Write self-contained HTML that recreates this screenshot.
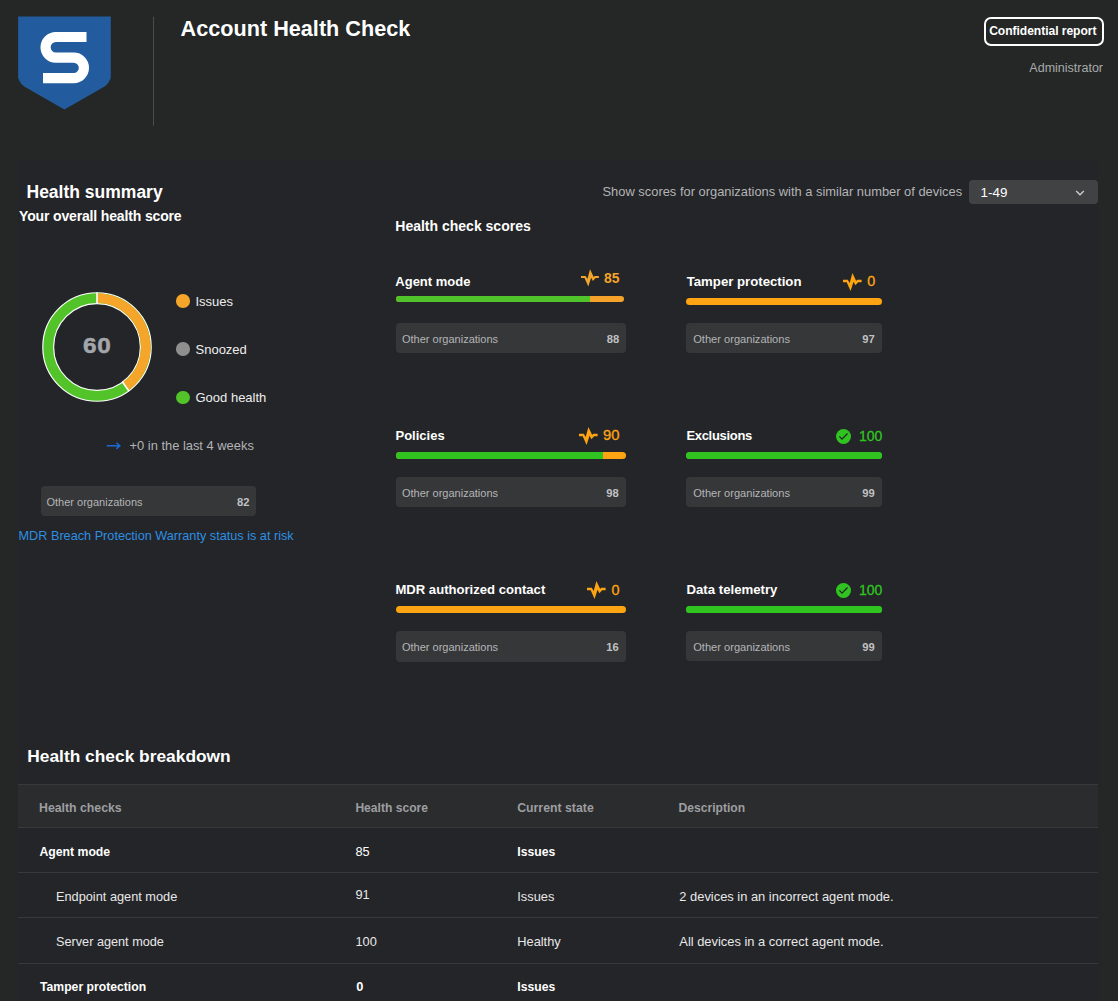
<!DOCTYPE html>
<html><head><meta charset="utf-8">
<style>
html,body{margin:0;padding:0;}
body{width:1118px;height:1001px;overflow:hidden;background:#242726;position:relative;font-family:"Liberation Sans",sans-serif;color:#fff;}
.t{position:absolute;line-height:1;white-space:nowrap;}
.b{font-weight:bold;}
.abs{position:absolute;}
.bar{position:absolute;height:7px;border-radius:4px;overflow:hidden;background:#f6a01a;}
.bar i{position:absolute;left:0;top:0;bottom:0;background:#33c424;}
.box{position:absolute;background:#363739;border-radius:4px;}
.oo{position:absolute;line-height:1;white-space:nowrap;font-size:11px;color:#b4b5b7;}
.ov{position:absolute;line-height:1;white-space:nowrap;font-size:11.2px;color:#c0c1c4;font-weight:bold;text-align:right;}
.org{color:#f6a01a;}
.grn{color:#33c424;}
</style></head><body>

<!-- logo -->
<svg class="abs" style="left:0;top:0" width="160" height="130" viewBox="0 0 160 130">
  <path d="M18.1 16.6 H110.8 V78 L109.4 81 Q107.9 84.3 104.6 86.4 L64.4 109.4 L24.2 86.4 Q20.9 84.3 19.5 81 L18.1 78 Z" fill="#225c9f"/>
  <path d="M86.5 37 L55.85 37 A10.3 10.3 0 0 0 55.85 57.6 L73.65 57.6 A10.25 10.25 0 0 1 73.65 78.1 L43 78.1" fill="none" stroke="#fff" stroke-width="10.2"/>
  <rect x="153" y="16.7" width="1" height="109" fill="#4a4b4c"/>
</svg>

<div class="t b" style="left:180.6px;top:18.0px;font-size:21.65px;">Account Health Check</div>

<div class="abs" style="left:984px;top:17.2px;width:116px;height:24.6px;border:2px solid #fff;border-radius:7px;"></div>
<div class="t b" style="left:989.2px;top:24.7px;font-size:12.1px;letter-spacing:-0.05px;">Confidential report</div>
<div class="t" style="right:15px;top:62px;font-size:12.5px;color:#a9aaac;">Administrator</div>

<div class="abs" style="left:18px;top:161px;width:1080px;height:840px;background:#242528;"></div>
<!-- Health summary -->
<div class="t b" style="left:26.5px;top:183.5px;font-size:17.5px;">Health summary</div>
<div class="t b" style="left:19px;top:209px;font-size:14px;letter-spacing:-0.15px;">Your overall health score</div>

<svg class="abs" style="left:35.9px;top:286.4px" width="122" height="122" viewBox="-61 -61 122 122">
  <circle r="48.8" fill="none" stroke="#fff" stroke-width="12"/>
  <circle r="48.8" fill="none" stroke="#52c42a" stroke-width="9.7" />
  <path d="M0 -48.8 A48.8 48.8 0 0 1 28.68 39.48" fill="none" stroke="#f5a52a" stroke-width="9.7"/>
  <line x1="0" y1="-43" x2="0" y2="-54.6" stroke="#fff" stroke-width="1.6"/>
  <line x1="25.3" y1="34.8" x2="32.1" y2="44.2" stroke="#fff" stroke-width="1.6"/>
</svg>
<div class="t b" style="left:82.6px;top:335.2px;font-size:22.5px;color:#a3a6ab;letter-spacing:0.6px;transform:scaleX(1.08);transform-origin:0 0;-webkit-text-stroke:0.5px #a3a6ab;">60</div>

<div class="abs" style="left:176px;top:294px;width:13.6px;height:13.6px;border-radius:50%;background:#f5a52a;"></div>
<div class="abs" style="left:176px;top:342.4px;width:13.6px;height:13.6px;border-radius:50%;background:#8f8f90;"></div>
<div class="abs" style="left:176px;top:390.7px;width:13.6px;height:13.6px;border-radius:50%;background:#52c42a;"></div>
<div class="t" style="left:195.5px;top:294.9px;font-size:13px;color:#eee;">Issues</div>
<div class="t" style="left:195.5px;top:343px;font-size:13px;color:#eee;">Snoozed</div>
<div class="t" style="left:195.5px;top:391.4px;font-size:13px;color:#eee;">Good health</div>

<svg class="abs" style="left:104px;top:440px" width="20" height="12" viewBox="0 0 20 12">
  <path d="M2.8 5.8 H15.8 M12.4 2.7 L15.8 5.8 L12.4 8.9" fill="none" stroke="#1c6ad4" stroke-width="1.5"/>
</svg>
<div class="t" style="left:129.5px;top:440.3px;font-size:12.9px;color:#b2b3b5;">+0 in the last 4 weeks</div>

<div class="box" style="left:40.5px;top:486.3px;width:215.5px;height:29.7px;"></div>
<div class="oo" style="left:46.5px;top:497.1px;">Other organizations</div>
<div class="ov" style="right:868.6px;top:496.9px;">82</div>

<div class="t" style="left:18.5px;top:529.5px;font-size:12.7px;color:#2d8fe2;">MDR Breach Protection Warranty status is at risk</div>

<!-- Show scores -->
<div class="t" style="left:602.5px;top:186.3px;font-size:12.9px;color:#b3b4b6;">Show scores for organizations with a similar number of devices</div>
<div class="abs" style="left:969px;top:179.7px;width:128.8px;height:24.6px;background:#414244;border-radius:4px;"></div>
<div class="t" style="left:980.6px;top:185.6px;font-size:13.4px;color:#fff;">1-49</div>
<svg class="abs" style="left:1074px;top:188px" width="12" height="10" viewBox="0 0 12 10">
  <path d="M2.2 3 L6 6.8 L9.8 3" fill="none" stroke="#d0d0d0" stroke-width="1.3"/>
</svg>

<div class="t b" style="left:395.3px;top:219.4px;font-size:14px;">Health check scores</div>

<!-- CARDS (content added below) -->
<!-- CARDS START -->
<div class="t b" style="left:395.30px;top:275.00px;font-size:13px;letter-spacing:0px;">Agent mode</div>
<div class="t" style="color:#f3a42a;right:498.50px;top:271.73px;font-size:13.9px;font-weight:bold;">85</div>
<svg class="abs" style="left:578.50px;top:266.60px;overflow:visible" width="24" height="22" viewBox="-2 -10 24 22"><path d="M0.00 -1.10 L4.64 -1.10 L6.39 1.99 L9.04 -7.72 L12.67 0.10 L13.63 -1.10 L17.86 -1.10 L17.86 1.10 L14.59 1.10 L11.90 3.97 L10.15 0.66 L7.28 9.48 L3.53 1.10 L0.00 1.10 Z" fill="#f3a42a"/></svg>
<div class="bar" style="left:396px;top:295.6px;width:227.70px;height:6.20px;background:#f4a22a"><i style="width:193.70px;background:#50c22a"></i></div>
<div class="box" style="left:396px;top:323px;width:230.00px;height:29.70px;"></div>
<div class="oo" style="left:402.00px;top:333.59px;font-size:11px;">Other organizations</div>
<div class="ov" style="right:498.90px;top:333.52px;">88</div>
<div class="t b" style="left:686.70px;top:274.73px;font-size:13.2px;letter-spacing:0px;">Tamper protection</div>
<div class="t" style="color:#fda412;right:242.70px;top:273.81px;font-size:14.4px;font-weight:normal;-webkit-text-stroke:0.3px #fda412;">0</div>
<svg class="abs" style="left:841.00px;top:270.80px;overflow:visible" width="24" height="22" viewBox="-2 -10 24 22"><path d="M0.00 -1.15 L4.83 -1.15 L6.66 2.07 L9.42 -8.04 L13.20 0.10 L14.20 -1.15 L18.60 -1.15 L18.60 1.15 L15.20 1.15 L12.40 4.14 L10.57 0.69 L7.58 9.88 L3.68 1.15 L0.00 1.15 Z" fill="#fda412"/></svg>
<div class="bar" style="left:686px;top:298px;width:196.00px;height:7.00px;background:#fda412"></div>
<div class="box" style="left:686px;top:323px;width:196.00px;height:29.70px;"></div>
<div class="oo" style="left:693.20px;top:333.50px;font-size:11.1px;">Other organizations</div>
<div class="ov" style="right:243.20px;top:333.52px;">97</div>
<div class="t b" style="left:395.50px;top:429.00px;font-size:13px;letter-spacing:0px;">Policies</div>
<div class="t" style="color:#fda412;right:498.50px;top:428.27px;font-size:14.8px;font-weight:normal;-webkit-text-stroke:0.3px #fda412;">90</div>
<svg class="abs" style="left:577.00px;top:424.70px;overflow:visible" width="24" height="22" viewBox="-2 -10 24 22"><path d="M0.00 -1.15 L4.83 -1.15 L6.66 2.07 L9.42 -8.04 L13.20 0.10 L14.20 -1.15 L18.60 -1.15 L18.60 1.15 L15.20 1.15 L12.40 4.14 L10.57 0.69 L7.58 9.88 L3.68 1.15 L0.00 1.15 Z" fill="#fda412"/></svg>
<div class="bar" style="left:396px;top:451.8px;width:230.00px;height:7.10px;background:#fda412"><i style="width:207.10px;background:#30c421"></i></div>
<div class="box" style="left:396px;top:477px;width:230.00px;height:29.80px;"></div>
<div class="oo" style="left:402.00px;top:487.59px;font-size:11px;">Other organizations</div>
<div class="ov" style="right:499.30px;top:487.52px;">98</div>
<div class="t b" style="left:686.40px;top:429.10px;font-size:13px;letter-spacing:-0.3px;">Exclusions</div>
<div class="t" style="color:#30c421;right:235.60px;top:428.65px;font-size:14px;font-weight:normal;-webkit-text-stroke:0.3px #30c421;">100</div>
<svg class="abs" style="left:836.00px;top:428.80px" width="15.0" height="15.0" viewBox="-7.5 -7.5 15 15"><circle r="7.5" fill="#30c421"/><path d="M-4.1 -0.1 L-1.5 2.6 L4.0 -3.0" fill="none" stroke="#222326" stroke-width="1.3"/></svg>
<div class="bar" style="left:686px;top:451.9px;width:196.00px;height:6.90px;background:#30c421"><i style="width:196.00px;background:#30c421"></i></div>
<div class="box" style="left:686px;top:477px;width:196.00px;height:30.00px;"></div>
<div class="oo" style="left:693.20px;top:487.50px;font-size:11.1px;">Other organizations</div>
<div class="ov" style="right:243.20px;top:487.52px;">99</div>
<div class="t b" style="left:395.40px;top:583.11px;font-size:13.1px;letter-spacing:0px;">MDR authorized contact</div>
<div class="t" style="color:#fda412;right:498.40px;top:582.51px;font-size:14.4px;font-weight:normal;-webkit-text-stroke:0.3px #fda412;">0</div>
<svg class="abs" style="left:585.10px;top:578.70px;overflow:visible" width="24" height="22" viewBox="-2 -10 24 22"><path d="M0.00 -1.15 L4.83 -1.15 L6.66 2.07 L9.42 -8.04 L13.20 0.10 L14.20 -1.15 L18.60 -1.15 L18.60 1.15 L15.20 1.15 L12.40 4.14 L10.57 0.69 L7.58 9.88 L3.68 1.15 L0.00 1.15 Z" fill="#fda412"/></svg>
<div class="bar" style="left:396px;top:605.8px;width:230.00px;height:7.40px;background:#fda412"></div>
<div class="box" style="left:396px;top:631px;width:230.00px;height:30.70px;"></div>
<div class="oo" style="left:402.00px;top:641.59px;font-size:11px;">Other organizations</div>
<div class="ov" style="right:499.30px;top:641.52px;">16</div>
<div class="t b" style="left:686.50px;top:582.93px;font-size:13.2px;letter-spacing:0px;">Data telemetry</div>
<div class="t" style="color:#30c421;right:235.70px;top:582.55px;font-size:14px;font-weight:normal;-webkit-text-stroke:0.3px #30c421;">100</div>
<svg class="abs" style="left:836.20px;top:582.90px" width="15.0" height="15.0" viewBox="-7.5 -7.5 15 15"><circle r="7.5" fill="#30c421"/><path d="M-4.1 -0.1 L-1.5 2.6 L4.0 -3.0" fill="none" stroke="#222326" stroke-width="1.3"/></svg>
<div class="bar" style="left:686px;top:606px;width:196.00px;height:7.30px;background:#30c421"><i style="width:196.00px;background:#30c421"></i></div>
<div class="box" style="left:686px;top:631.4px;width:196.00px;height:30.10px;"></div>
<div class="oo" style="left:693.20px;top:641.90px;font-size:11.1px;">Other organizations</div>
<div class="ov" style="right:243.20px;top:641.92px;">99</div>
<!-- CARDS END -->

<!-- Breakdown -->
<div class="t b" style="left:27.3px;top:748.0px;font-size:17.35px;">Health check breakdown</div>
<!-- TABLE START -->
<div class="abs" style="left:18px;top:784px;width:1080px;height:43px;background:#2b2c2e;"></div>
<div class="abs" style="left:18px;top:784px;width:1080px;height:1px;background:#38393b;"></div>
<div class="abs" style="left:18px;top:827px;width:1080px;height:1px;background:#38393b;"></div>
<div class="abs" style="left:18px;top:872px;width:1080px;height:1px;background:#38393b;"></div>
<div class="abs" style="left:18px;top:917px;width:1080px;height:1px;background:#38393b;"></div>
<div class="abs" style="left:18px;top:963px;width:1080px;height:1px;background:#38393b;"></div>
<div class="t" style="left:39.00px;top:801.69px;font-size:12.3px;font-weight:bold;color:#9d9ea0;">Health checks</div>
<div class="t" style="left:355.40px;top:801.86px;font-size:12.1px;font-weight:bold;color:#9d9ea0;">Health score</div>
<div class="t" style="left:517.20px;top:801.69px;font-size:12.3px;font-weight:bold;color:#9d9ea0;">Current state</div>
<div class="t" style="left:678.60px;top:801.86px;font-size:12.1px;font-weight:bold;color:#9d9ea0;">Description</div>
<div class="t" style="left:39.40px;top:846.13px;font-size:12.25px;font-weight:bold;color:#fff;">Agent mode</div>
<div class="t" style="left:355.50px;top:845.56px;font-size:12.8px;color:#fff;">85</div>
<div class="t" style="left:517.30px;top:846.17px;font-size:12.2px;font-weight:bold;color:#fff;">Issues</div>
<div class="t" style="left:56.00px;top:890.51px;font-size:12.75px;color:#e8e8e8;">Endpoint agent mode</div>
<div class="t" style="left:355.50px;top:888.66px;font-size:12.8px;color:#e8e8e8;">91</div>
<div class="t" style="left:517.30px;top:890.66px;font-size:12.8px;color:#e8e8e8;">Issues</div>
<div class="t" style="left:679.30px;top:890.58px;font-size:12.9px;color:#e8e8e8;">2 devices in an incorrect agent mode.</div>
<div class="t" style="left:56.00px;top:935.55px;font-size:12.7px;color:#e8e8e8;">Server agent mode</div>
<div class="t" style="left:355.50px;top:935.76px;font-size:12.8px;color:#e8e8e8;">100</div>
<div class="t" style="left:517.30px;top:935.76px;font-size:12.8px;color:#e8e8e8;">Healthy</div>
<div class="t" style="left:679.30px;top:935.68px;font-size:12.9px;color:#e8e8e8;">All devices in a correct agent mode.</div>
<div class="t" style="left:40.00px;top:980.97px;font-size:12.2px;font-weight:bold;color:#fff;">Tamper protection</div>
<div class="t" style="left:356.20px;top:981.36px;font-size:12.8px;font-weight:bold;color:#fff;">0</div>
<div class="t" style="left:517.30px;top:980.97px;font-size:12.2px;font-weight:bold;color:#fff;">Issues</div>
<!-- TABLE END -->

</body></html>
